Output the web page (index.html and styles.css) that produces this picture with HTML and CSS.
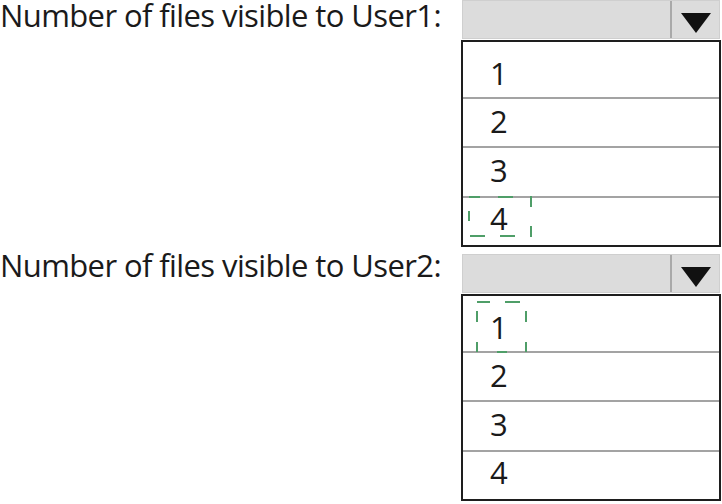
FILE: index.html
```html
<!DOCTYPE html>
<html lang="en">
<head>
    <meta charset="UTF-8">
    <title>Files visible to users</title>
    <link rel="stylesheet" href="styles.css">
</head>
<body>
    <div class="field">
        <div class="label">Number of files visible to User1:</div>
        <div class="dropdown">
            <div class="select">
                <span class="value"></span>
                <span class="arrow">
                    <svg width="30" height="20" viewBox="0 0 30 20"><path d="M0 0H30L15 20Z" fill="#111"/></svg>
                </span>
            </div>
            <ul class="options">
                <li>1</li>
                <li>2</li>
                <li>3</li>
                <li class="picked">4
                    <svg class="mark mark-a" width="64" height="41" viewBox="0 0 64 41">
                        <path d="M1 1H12M30 1H45M63 0V11M63 30V41M2 40H17M32 40H47M1 15V25"/>
                    </svg>
                </li>
            </ul>
        </div>
    </div>

    <div class="field">
        <div class="label">Number of files visible to User2:</div>
        <div class="dropdown">
            <div class="select">
                <span class="value"></span>
                <span class="arrow">
                    <svg width="30" height="20" viewBox="0 0 30 20"><path d="M0 0H30L15 20Z" fill="#111"/></svg>
                </span>
            </div>
            <ul class="options">
                <li class="picked">1
                    <svg class="mark mark-b" width="51" height="52" viewBox="0 0 51 52">
                        <path d="M1 1H14M29 1H44M1 10V21M1 41V51M50 10V21M50 41V51M21 51H31"/>
                    </svg>
                </li>
                <li>2</li>
                <li>3</li>
                <li>4</li>
            </ul>
        </div>
    </div>
</body>
</html>
```

FILE: styles.css
```css
* {
    margin: 0;
    padding: 0;
    box-sizing: border-box;
}

body {
    font-family: 'Open Sans', 'Noto Sans', sans-serif;
    color: #1a1a1a;
    background: #fff;
    width: 722px;
}

.field {
    display: grid;
    grid-template-columns: 461px 260px;
    align-items: start;
}

.field + .field {
    margin-top: 7px;
}

.label {
    font-size: 31px;
    line-height: 1;
    letter-spacing: -0.6px;
    white-space: nowrap;
}

.field + .field .label {
    margin-top: -4px;
}

.select {
    display: flex;
    height: 39px;
    margin: 0 1px 1px;
    background: #dcdcdc;
    border: 1px solid #cfcfcf;
}

.value {
    flex: 1;
    border-right: 2px solid #a9a9a9;
}

.arrow {
    width: 47px;
    display: flex;
    align-items: center;
    justify-content: center;
    padding-top: 7px;
}

.options {
    list-style: none;
    border: 2px solid #1e1e1e;
}

.options li {
    position: relative;
    height: 49px;
    padding: 7px 0 0 27px;
    font-size: 31px;
    line-height: 1;
    border-bottom: 2px solid #a3a3a3;
}

.options li:first-child {
    height: 57px;
    padding-top: 16px;
}

.options li:nth-child(3) {
    height: 50px;
}

.options li:last-child {
    height: 47px;
    padding-top: 5px;
    border-bottom: none;
}

.mark {
    position: absolute;
    overflow: visible;
    fill: none;
    stroke: #4f9e68;
    stroke-width: 2;
}

.mark-a {
    left: 5px;
    top: -2px;
}

.mark-b {
    left: 13px;
    top: 5px;
}
```
